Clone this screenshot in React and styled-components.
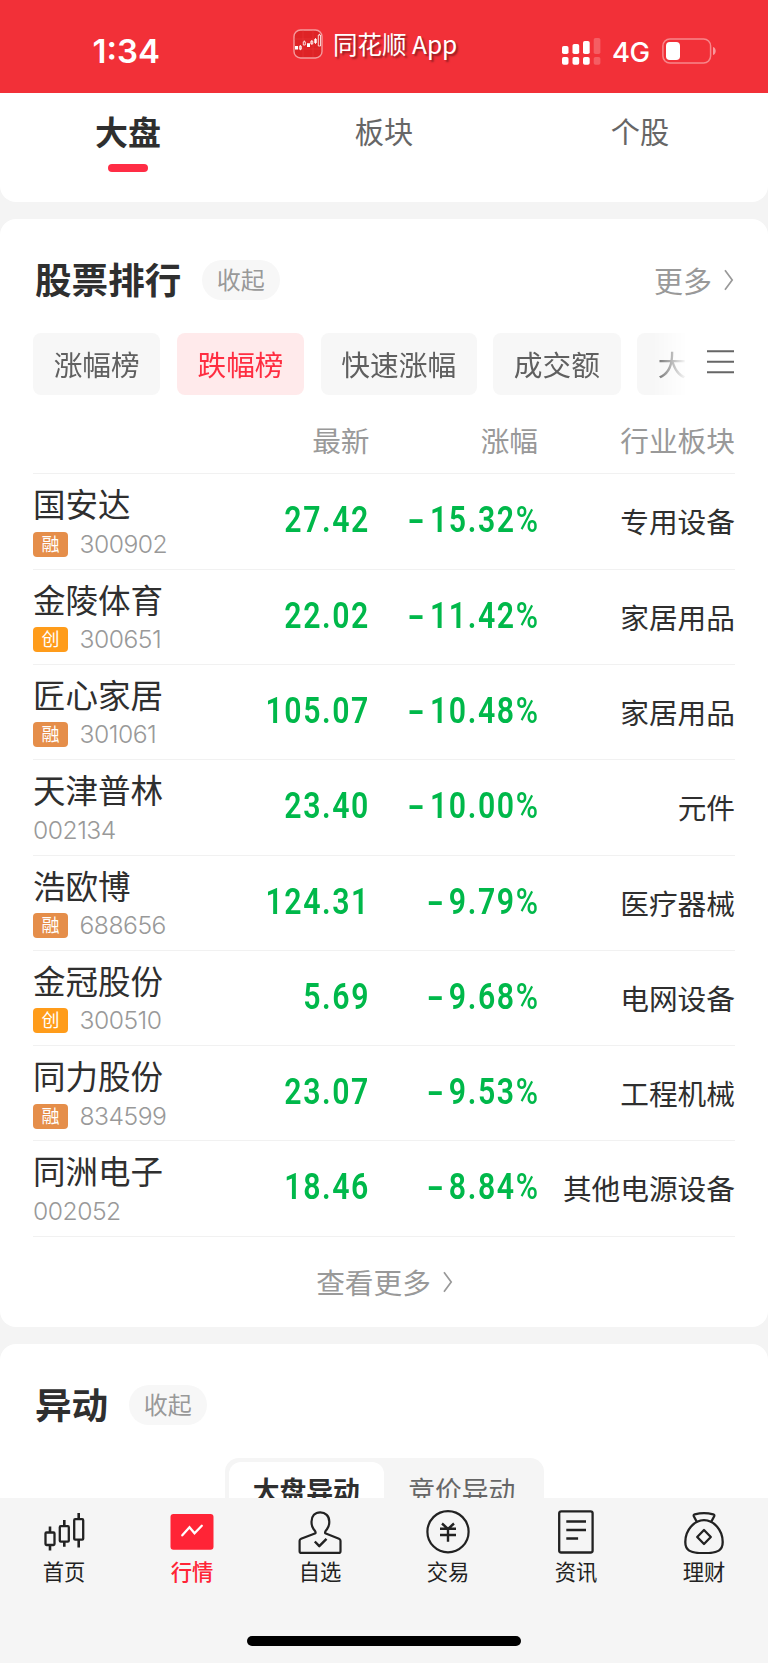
import { useState } from 'react';
import styled, { createGlobalStyle } from 'styled-components';


const tabs = ['大盘', '板块', '个股'];

const ranks = ['涨幅榜', '跌幅榜', '快速涨幅', '成交额', '大单净量'];

const stocks = [
    { name: '国安达', tag: '融', code: '300902', price: '27.42', change: '15.32', sector: '专用设备' },
    { name: '金陵体育', tag: '创', code: '300651', price: '22.02', change: '11.42', sector: '家居用品' },
    { name: '匠心家居', tag: '融', code: '301061', price: '105.07', change: '10.48', sector: '家居用品' },
    { name: '天津普林', code: '002134', price: '23.40', change: '10.00', sector: '元件' },
    { name: '浩欧博', tag: '融', code: '688656', price: '124.31', change: '9.79', sector: '医疗器械' },
    { name: '金冠股份', tag: '创', code: '300510', price: '5.69', change: '9.68', sector: '电网设备' },
    { name: '同力股份', tag: '融', code: '834599', price: '23.07', change: '9.53', sector: '工程机械' },
    { name: '同洲电子', code: '002052', price: '18.46', change: '8.84', sector: '其他电源设备' },
];

const navItems = [
    { label: '首页', Icon: CandleIcon },
    { label: '行情', Icon: MarketIcon },
    { label: '自选', Icon: PersonIcon },
    { label: '交易', Icon: TradeIcon },
    { label: '资讯', Icon: NewsIcon },
    { label: '理财', Icon: BagIcon },
];


const App = () => {

    const [tab, setTab] = useState('大盘');
    const [rank, setRank] = useState('跌幅榜');
    const [move, setMove] = useState('大盘异动');
    const [page, setPage] = useState('行情');

    return (
        <>
            <GlobalStyle />
            <Screen>
                <StatusBar>
                    <Clock>1:34</Clock>
                    <AppMark>
                        <AppLogo />
                        <span>同花顺 App</span>
                    </AppMark>
                    <Signals>
                        <CellIcon />
                        <Network>4G</Network>
                        <BatteryIcon />
                    </Signals>
                </StatusBar>

                <Content>
                    <TabBar>
                        {tabs.map(t => (
                            <Tab key={t} $active={t === tab} onClick={() => setTab(t)}>{t}</Tab>
                        ))}
                    </TabBar>

                    <RankCard>
                        <CardHeader>
                            <Title>股票排行</Title>
                            <Pill>收起</Pill>
                            <More>更多 <Chevron /></More>
                        </CardHeader>

                        <ChipRow>
                            <Chips>
                                {ranks.map(r => (
                                    <Chip key={r} $active={r === rank} onClick={() => setRank(r)}>{r}</Chip>
                                ))}
                            </Chips>
                            <MenuIcon />
                        </ChipRow>

                        <HeadRow>
                            <span />
                            <span>最新</span>
                            <span>涨幅</span>
                            <span>行业板块</span>
                        </HeadRow>
                        {stocks.map(s => (
                            <Row key={s.code}>
                                <Stock>
                                    <Name>{s.name}</Name>
                                    <Meta>
                                        {s.tag && <Tag $kind={s.tag}>{s.tag}</Tag>}
                                        <Code>{s.code}</Code>
                                    </Meta>
                                </Stock>
                                <Num>{s.price}</Num>
                                <Num><Minus>-</Minus>{s.change}<Percent>%</Percent></Num>
                                <Sector>{s.sector}</Sector>
                            </Row>
                        ))}

                        <ViewMore>查看更多 <Chevron /></ViewMore>
                    </RankCard>

                    <MoveCard>
                        <CardHeader>
                            <Title>异动</Title>
                            <Pill>收起</Pill>
                        </CardHeader>
                        <Segment>
                            {['大盘异动', '竞价异动'].map(m => (
                                <SegmentItem key={m} $active={m === move} onClick={() => setMove(m)}>{m}</SegmentItem>
                            ))}
                        </Segment>
                    </MoveCard>
                </Content>

                <BottomNav>
                    <NavList>
                        {navItems.map(({ label, Icon }) => (
                            <NavItem key={label} $active={label === page} onClick={() => setPage(label)}>
                                <Icon />
                                {label}
                            </NavItem>
                        ))}
                    </NavList>
                    <HomeIndicator />
                </BottomNav>
            </Screen>
        </>
    )
}

export default App;


function AppLogo() {
    return (
        <svg width="30" height="30" viewBox="0 0 30 30" fill="none">
            <rect x="1" y="1" width="28" height="28" rx="6.5" fill="#de2326" stroke="#f59a9c" strokeWidth="1.4" />
            <path d="M1.6 10H28M1.6 20H28M10 1.6V28M20 1.6V28" stroke="#e8383b" strokeWidth=".6" />
            <path d="M2 17h3v3.400h-3zM14 14.300h3v3.700h-3zM21.300 10h2.400v4h-2.400z" fill="#fff" />
            <path d="M6.400 17.200h2v3h-2zM10.300 12.800h2v3.200h-2zM17.800 12.200h2v2.600h-2zM25.300 6h2.200v11h-2.200zM7.400 16v5.200M11.300 11.500v1.300M18.800 11v4.800M22.500 9v6M26.400 4.800v1.200" stroke="#fff" strokeWidth=".8" />
        </svg>
    )
}

function CellIcon() {
    return (
        <svg width="39" height="28" viewBox="0 0 39 28" fill="#fff">
            <rect x="0" y="9" width="6.500" height="8" rx="1.800" />
            <rect x="10.500" y="7" width="6.700" height="10" rx="1.800" />
            <rect x="21" y="4" width="6.700" height="13" rx="1.800" />
            <rect x="31.700" y="1" width="6.700" height="16" rx="1.800" opacity=".22" />
            <rect x="0" y="20" width="6.500" height="7.700" rx="1.800" />
            <rect x="10.500" y="20" width="6.700" height="7.700" rx="1.800" />
            <rect x="21" y="20" width="6.700" height="7.700" rx="1.800" />
            <rect x="31.700" y="20" width="6.700" height="7.700" rx="1.800" opacity=".22" />
        </svg>
    )
}

function BatteryIcon() {
    return (
        <svg width="55" height="26" viewBox="0 0 55 26" fill="none">
            <rect x=".9" y=".9" width="47.700" height="24.200" rx="7" stroke="#fff" strokeOpacity=".42" strokeWidth="1.500" />
            <rect x="4" y="4" width="14" height="18" rx="3.800" fill="#fff" />
            <path d="M51 9c3.600 1 3.600 7 0 8z" fill="#fff" fillOpacity=".5" />
        </svg>
    )
}

function Chevron() {
    return (
        <svg width="11" height="22" viewBox="0 0 11 22" fill="none" stroke="#999" strokeWidth="1.700">
            <path d="M1 1.200l7.200 9.800-7.200 9.800" />
        </svg>
    )
}

function MenuIcon() {
    return (
        <svg width="28" height="28" viewBox="0 0 28 28" stroke="#666" strokeWidth="2.100">
            <path d="M0 1.200h27M0 11.700h27M0 22.200h27" />
        </svg>
    )
}

function CandleIcon() {
    return (
        <svg width="44" height="44" viewBox="0 0 44 44" fill="none" stroke="#222" strokeWidth="2.300">
            <rect x="3.500" y="22.500" width="9" height="12.500" rx="1" />
            <rect x="17.800" y="16.200" width="9" height="15.500" rx="1" />
            <rect x="32.200" y="9.200" width="9" height="20.500" rx="1" />
            <path d="M8 16.500v6M8 35v5.500M22.300 10v6.200M22.300 31.700v5M36.700 3v6.200M36.700 29.700v7.800" strokeWidth="2.600" />
        </svg>
    )
}

function MarketIcon() {
    return (
        <svg width="44" height="44" viewBox="0 0 44 44" fill="none">
            <rect x=".5" y="4" width="43" height="35.700" rx="3" fill="#ff2436" />
            <path d="M12.300 25.300l7.200-8 5 6 7.300-7.500" stroke="#fff" strokeWidth="2.300" strokeLinecap="round" />
        </svg>
    )
}

function PersonIcon() {
    return (
        <svg width="44" height="44" viewBox="0 0 44 44" fill="none" stroke="#222" strokeWidth="2.200" strokeLinejoin="round">
            <path d="M17.500 23.200c.6-1.600-.7-2.500-2-4.200-1.500-2-2-4.500-2-7.300C13.500 6 17 2.300 22.200 2.300s9.100 3.700 9.100 9.400c0 2.800-.7 5.300-2.200 7.300-1.300 1.700-2.600 2.600-1.900 4.200l13.800 5.500c1 .4 1.500 1 1.500 2v10.500c0 1-.6 1.700-1.700 1.700H3.300c-1.100 0-1.700-.7-1.700-1.700V30.700c0-1 .5-1.600 1.500-2z" />
            <path d="M16.800 31.500l4.500 4.700 7.200-7.400" strokeWidth="2.400" />
        </svg>
    )
}

function TradeIcon() {
    return (
        <svg width="44" height="44" viewBox="0 0 44 44" fill="none" stroke="#222" strokeWidth="2.200">
            <circle cx="22" cy="21.700" r="20.600" />
            <path d="M14 18.800h16M14 25h16M22 19v12.800M16 13.500l6 5.300 6-5.300" strokeWidth="2.400" />
        </svg>
    )
}

function NewsIcon() {
    return (
        <svg width="44" height="44" viewBox="0 0 44 44" fill="none" stroke="#222" strokeWidth="2.300">
            <rect x="5.200" y="1.300" width="33.400" height="41.200" rx="2" />
            <path d="M12.300 11.500h19.700M12.300 20h19.700M12.300 28.500h11.800" />
        </svg>
    )
}

function BagIcon() {
    return (
        <svg width="44" height="44" viewBox="0 0 44 44" fill="none" stroke="#222" strokeWidth="2.300" strokeLinejoin="round">
            <path d="M15 12.300l-3.200-6c-.4-.9 0-1.700 1-2 5.500-1.300 12.900-1.300 18.400 0 1 .3 1.400 1.100 1 2l-3.200 6" />
            <path d="M22 10.200c-9.600 0-18.700 9.800-18.700 21.800 0 8 4.200 11.200 18.700 11.200S40.700 40 40.700 32C40.700 20 31.600 10.200 22 10.200z" />
            <path d="M22 20l6.800 7-6.800 7-6.800-7z" />
        </svg>
    )
}


const GlobalStyle = createGlobalStyle`
    * {
        box-sizing: border-box;
    }
    body {
        margin: 0;
        background: #f4f4f4;
        font-family: "Noto Sans CJK SC", sans-serif;
        color: #2f2f2f;
    }
    svg {
        display: block;
        flex-shrink: 0;
    }
`

const Screen = styled.div`
    width: 768px;
    height: 1663px;
    display: flex;
    flex-direction: column;
    overflow: hidden;
    background: #f4f4f4;
`

const StatusBar = styled.header`
    flex: none;
    height: 92.500px;
    display: grid;
    grid-template-columns: 293px 1fr 206px;
    align-items: start;
    background: #f23038;
    color: #fff;
`

const Clock = styled.div`
    padding: 31px 0 0 92.500px;
    font: 600 33px/40px Inter, sans-serif;
`

const AppMark = styled.div`
    display: flex;
    gap: 10px;
    margin-top: 29px;
    font-size: 24.500px;
    line-height: 30px;
    white-space: nowrap;
    text-shadow: 2px 2px 2px rgba(0, 0, 0, .4);
`

const Signals = styled.div`
    display: flex;
    align-items: center;
    margin-top: 36.500px;
`

const Network = styled.span`
    width: 61px;
    padding: 1px 0 0 11px;
    font: 500 27.500px/28px Inter, sans-serif;
    letter-spacing: -.5px;
`

const Content = styled.main`
    flex: 1;
    min-height: 0;
    display: flex;
    flex-direction: column;
    gap: 16.500px;
    overflow: hidden;
`

const Card = styled.section`
    flex: none;
    background: #fff;
    border-radius: 16px;
`

const TabBar = styled.nav`
    flex: none;
    height: 109.500px;
    display: grid;
    grid-template-columns: repeat(3, 1fr);
    background: #fff;
    border-radius: 0 0 16px 16px;
`

const Tab = styled.div`
    display: flex;
    flex-direction: column;
    align-items: center;
    padding-top: ${p => p.$active ? '18.500px' : '17.500px'};
    font-size: ${p => p.$active ? '33px' : '29.200px'};
    font-weight: ${p => p.$active ? 700 : 400};
    line-height: 40px;
    color: ${p => p.$active ? '#2f2f2f' : '#666'};

    &::after {
        content: "";
        width: 40px;
        height: 8.500px;
        margin-top: 12.500px;
        border-radius: 5px;
        background: ${p => p.$active ? '#ff2d45' : 'transparent'};
    }
`

const RankCard = styled(Card)`
    height: 1108.500px;
    padding: 0 33px;
`

const CardHeader = styled.div`
    height: 40px;
    margin-top: 41.500px;
    display: flex;
    align-items: center;
`

const Title = styled.h2`
    margin: 0 20.500px 0 2px;
    font-size: 36.600px;
    font-weight: 700;
    line-height: 40px;
    padding-bottom: 3px;
`

const Pill = styled.span`
    width: 78px;
    height: 40px;
    border-radius: 20px;
    background: #f7f7f7;
    color: #999;
    font-size: 24px;
    line-height: 37.500px;
    text-align: center;
`

const More = styled.a`
    display: flex;
    align-items: center;
    gap: 12px;
    margin-left: auto;
    padding-bottom: 1px;
    color: #999;
    font-size: 29px;
    line-height: 38px;
`

const ChipRow = styled.div`
    display: flex;
    align-items: center;
    justify-content: space-between;
    margin-top: 33px;
`

const Chips = styled.div`
    width: 654px;
    display: flex;
    gap: 16.500px;
    overflow: hidden;
    mask-image: linear-gradient(to right, #000 620px, transparent 654px);
`

const Chip = styled.div`
    flex: none;
    height: 62px;
    padding: 0 20.650px;
    border-radius: 8px;
    background: ${p => p.$active ? '#ffeaeb' : '#f7f7f7'};
    color: ${p => p.$active ? '#ff2d41' : '#606060'};
    font-size: 28.700px;
    line-height: 61px;
`

const HeadRow = styled.div`
    height: 79.200px;
    padding-top: 14.500px;
    display: grid;
    grid-template-columns: 153.500px 183px 168.500px 1fr;
    border-bottom: 1.500px solid #f1f1f1;
    color: #999;
    font-size: 28.700px;
    line-height: 59.500px;
    text-align: right;
`

const Row = styled.div`
    height: 95.340px;
    display: grid;
    grid-template-columns: 154px 183px 169.500px 1fr;
    border-bottom: 1.500px solid #f1f1f1;
`

const Stock = styled.div`
    padding-top: 10px;
    white-space: nowrap;
`

const Name = styled.div`
    font-size: 32.500px;
    line-height: 38px;
`

const Meta = styled.div`
    display: flex;
    align-items: center;
    gap: 11.500px;
    height: 25px;
    margin-top: 9.500px;
`

const Tag = styled.span`
    width: 35px;
    height: 25px;
    border-radius: 4px;
    background: ${p => p.$kind === '创' ? '#ff9c1a' : '#e58e4a'};
    color: #fff;
    font-size: 18px;
    line-height: 23px;
    text-align: center;
`

const Code = styled.span`
    color: #999;
    font: 300 24.700px/25px Inter, sans-serif;
    letter-spacing: -.5px;
`

/* narrow digits for quotes */
const Num = styled.div`
    color: #00b84a;
    font: 600 36px/93px Roboto, sans-serif;
    letter-spacing: 1.900px;
    text-align: right;
    white-space: nowrap;
    transform: scaleX(.84);
    transform-origin: right;
`

const Minus = styled.span`
    display: inline-block;
    margin-right: 2.500px;
    transform: scaleX(1.600);
    transform-origin: right;
`

const Percent = styled.span`
    font-weight: 500;
`

const Sector = styled.div`
    font-size: 28.700px;
    line-height: 94px;
    text-align: right;
    white-space: nowrap;
`

const ViewMore = styled.a`
    display: flex;
    align-items: center;
    justify-content: center;
    gap: 12px;
    height: 90px;
    padding-left: 2px;
    color: #999;
    font-size: 28.700px;
`

const MoveCard = styled(Card)`
    height: 400px;
    padding: 0 33px;
`

const Segment = styled.div`
    width: 319px;
    height: 66px;
    margin: 32.500px auto 0;
    padding: 4px;
    display: grid;
    grid-template-columns: 1fr 1fr;
    border-radius: 14px;
    background: #f5f5f5;
`

const SegmentItem = styled.div`
    border-radius: 12px;
    background: ${p => p.$active ? '#fff' : 'transparent'};
    color: ${p => p.$active ? '#2f2f2f' : '#666'};
    font-size: 26.800px;
    font-weight: ${p => p.$active ? 700 : 400};
    line-height: 55px;
    text-align: center;
`

const BottomNav = styled.footer`
    flex: none;
    height: 165px;
    display: flex;
    flex-direction: column;
    align-items: center;
    background: #f5f5f5;
`

const NavList = styled.nav`
    width: 100%;
    height: 138px;
    display: grid;
    grid-template-columns: repeat(6, 1fr);
`

const NavItem = styled.div`
    display: flex;
    flex-direction: column;
    align-items: center;
    gap: 4px;
    padding-top: 12px;
    color: ${p => p.$active ? '#ff2436' : '#222'};
    font-size: 21.300px;
    font-weight: ${p => p.$active ? 500 : 400};
    line-height: 26px;
`

const HomeIndicator = styled.div`
    width: 274px;
    height: 10px;
    border-radius: 5px;
    background: #000;
`
